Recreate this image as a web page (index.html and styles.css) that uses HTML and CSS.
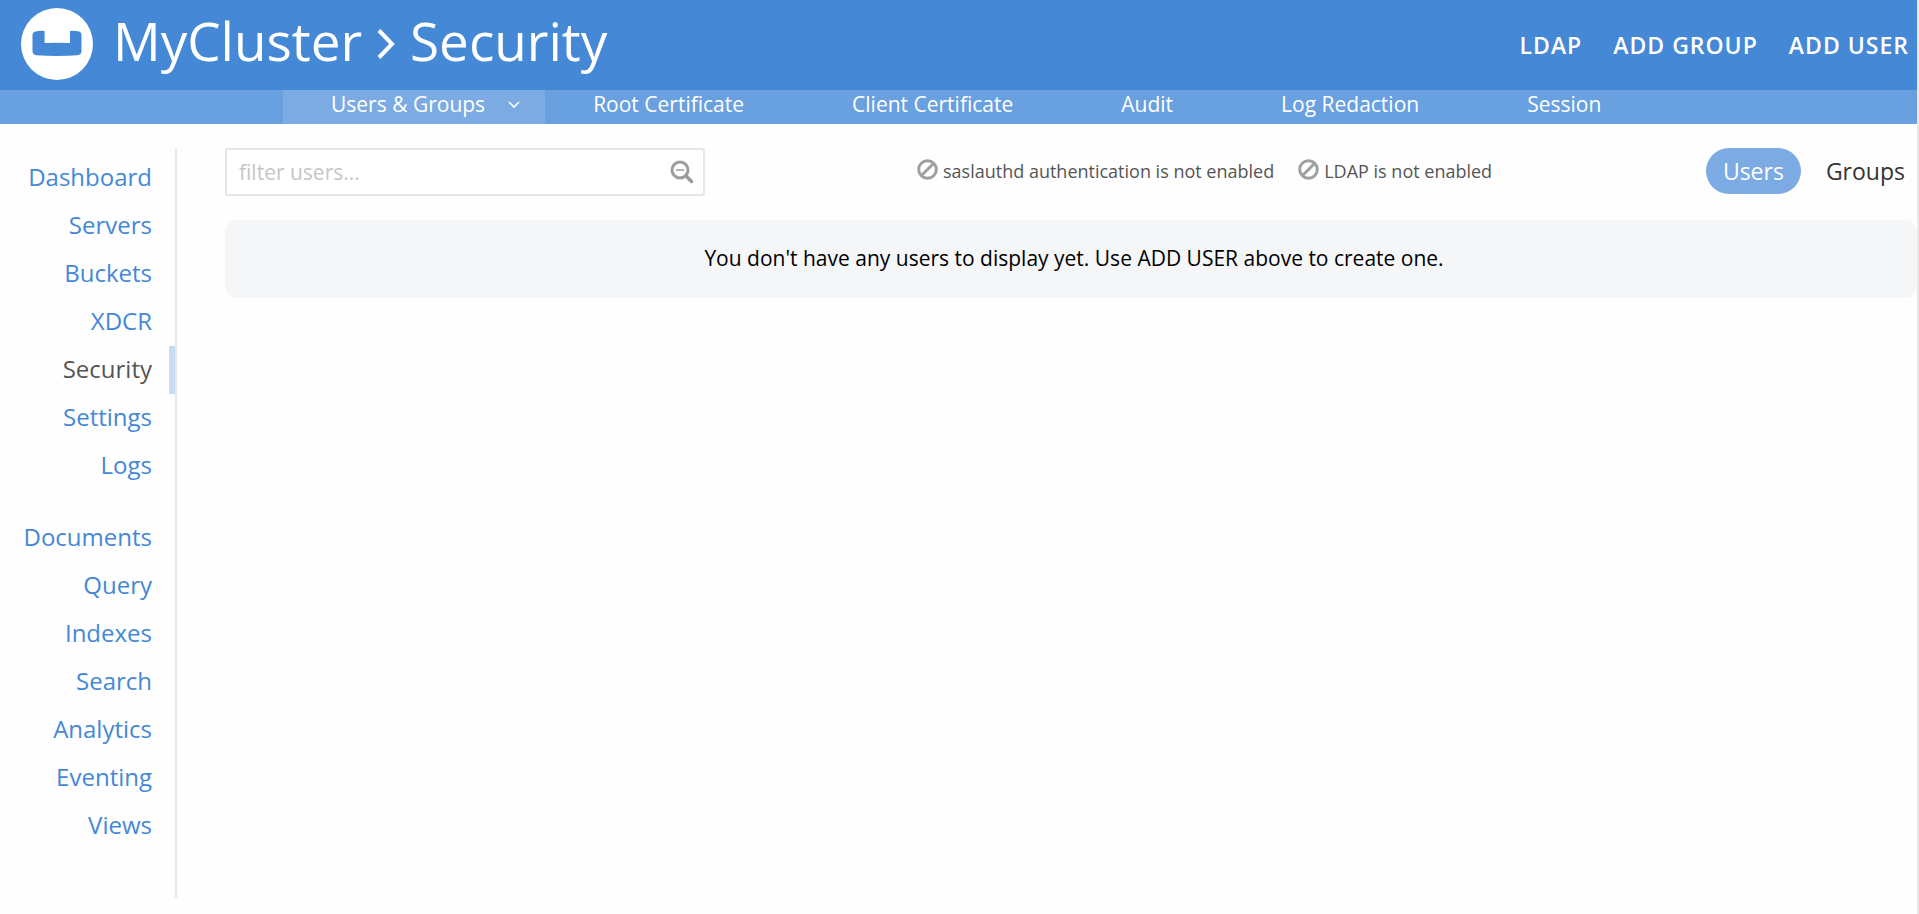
FILE: index.html
```html
<!DOCTYPE html>
<html lang="en">
<head>
<meta charset="utf-8">
<title>MyCluster &gt; Security</title>
<link rel="stylesheet" href="styles.css">
</head>
<body>
<div class="app">
  <header class="header">
    <svg class="logo" viewBox="0 0 72 72" aria-hidden="true">
      <circle cx="36" cy="36" r="36" fill="#fff"/>
      <path fill="#4588d6" d="M15.500 23.200q4-.6 8.100-.2V34.900q12.700-.5 25.400 0V23q4.100-.4 8.100.2 3.400.5 3.400 4V43q0 3.700-4 4.200-20.500 1.500-41 0-4-.5-4-4.200V27.200q0-3.500 4-4z"/>
    </svg>
    <h1 class="title">MyCluster
      <svg class="crumb" viewBox="0 0 18 30" role="img" aria-label="&gt;"><path d="M2 1.500L15 15 2 28.500" fill="none" stroke="currentColor" stroke-width="4"/></svg>
      Security</h1>
    <nav class="actions" aria-label="Actions">
      <a class="action" href="#">LDAP</a>
      <a class="action" href="#">ADD GROUP</a>
      <a class="action" href="#">ADD USER</a>
    </nav>
  </header>
  <nav class="tabs" aria-label="Security">
    <a class="tab tab-active" href="#">Users &amp; Groups
      <svg class="chevron" viewBox="0 0 14 10" aria-hidden="true"><path d="M2 2l5 5 5-5" fill="none" stroke="currentColor" stroke-width="1.600"/></svg>
    </a>
    <a class="tab" href="#">Root Certificate</a>
    <a class="tab" href="#">Client Certificate</a>
    <a class="tab" href="#">Audit</a>
    <a class="tab" href="#">Log Redaction</a>
    <a class="tab" href="#">Session</a>
  </nav>
  <div class="body">
    <nav class="sidebar" aria-label="Main">
      <a class="side" href="#">Dashboard</a>
      <a class="side" href="#">Servers</a>
      <a class="side" href="#">Buckets</a>
      <a class="side" href="#">XDCR</a>
      <a class="side side-active" href="#">Security</a>
      <a class="side" href="#">Settings</a>
      <a class="side" href="#">Logs</a>
      <a class="side side-group" href="#">Documents</a>
      <a class="side" href="#">Query</a>
      <a class="side" href="#">Indexes</a>
      <a class="side" href="#">Search</a>
      <a class="side" href="#">Analytics</a>
      <a class="side" href="#">Eventing</a>
      <a class="side" href="#">Views</a>
    </nav>
    <main class="main">
      <div class="toolbar">
        <div class="filter">
          <input class="filter-input" type="text" placeholder="filter users..." aria-label="filter users">
          <svg class="filter-icon" viewBox="0 0 24 24" aria-hidden="true"><g fill="none" stroke="#9c9c9c" stroke-linecap="round"><circle cx="10" cy="10" r="8" stroke-width="3"/><path d="M16.500 16.500l5 5" stroke-width="3.500"/><path d="M6.500 10h7" stroke-width="1.500"/></g></svg>
        </div>
        <div class="notices">
          <span class="notice"><svg class="ban" viewBox="0 0 21 21" aria-hidden="true"><g fill="none" stroke="#9f9f9f" stroke-width="3"><circle cx="10.500" cy="10.500" r="8.800"/><path d="M4.500 16.500l12-12"/></g></svg>saslauthd authentication is not enabled</span>
          <span class="notice"><svg class="ban" viewBox="0 0 21 21" aria-hidden="true"><g fill="none" stroke="#9f9f9f" stroke-width="3"><circle cx="10.500" cy="10.500" r="8.800"/><path d="M4.500 16.500l12-12"/></g></svg>LDAP is not enabled</span>
        </div>
        <div class="switch">
          <button class="pill pill-active" type="button">Users</button>
          <button class="pill" type="button">Groups</button>
        </div>
      </div>
      <p class="empty">You don't have any users to display yet. Use ADD USER above to create one.</p>
    </main>
  </div>
</div>
</body>
</html>
```
FILE: styles.css
```css
* { box-sizing: border-box; }
body {
  margin: 0;
  background: #fefefe;
  font-family: "Open Sans", "Noto Sans", sans-serif;
}
a { color: inherit; text-decoration: none; }
.app {
  min-height: 100vh;
  border-right: 2px solid #e8e8e8;
}
.header {
  display: flex;
  align-items: center;
  height: 90px;
  padding: 0 8px 2px 21px;
  background: #4588d6;
  color: #fff;
}
.logo { width: 72px; height: 72px; flex: none; }
.title {
  display: flex;
  align-items: center;
  gap: 15px;
  margin: 0 0 6px 20px;
  font-size: 53px;
  line-height: 72px;
  font-weight: 400;
}
.crumb { width: 18px; height: 30px; margin-top: 6px; }
.actions {
  display: flex;
  gap: 31px;
  margin: 2px 0 0 auto;
  font-size: 23px;
  line-height: 32px;
  font-weight: 600;
  letter-spacing: 1px;
}
.tabs {
  display: flex;
  height: 34px;
  padding-left: 283px;
  background: #69a0df;
  color: #fff;
  font-size: 21px;
  line-height: 29px;
}
.tab { padding: 0 60px 5px 48px; white-space: nowrap; }
.tab-active {
  display: flex;
  align-items: center;
  gap: 22px;
  padding-right: 24px;
  background: #7babe2;
}
.chevron { width: 14px; height: 10px; }
.body { display: flex; padding-top: 24px; }
.sidebar {
  flex: none;
  width: 177px;
  height: 750px;
  padding-top: 6px;
  border-right: 2px solid #e8e8e8;
  color: #4588d6;
  font-size: 24px;
  line-height: 46px;
  text-align: right;
}
.side { display: block; padding: 0 23px 2px 0; }
.side-active {
  padding-right: 17px;
  border-right: 6px solid #c7dbf2;
  color: #555;
}
.side-group { margin-top: 24px; }
.main { flex: 1; min-width: 0; padding-left: 48px; }
.toolbar { display: flex; align-items: center; height: 48px; }
.filter { position: relative; width: 480px; flex: none; }
.filter-input {
  display: block;
  width: 100%;
  height: 48px;
  padding: 0 48px 0 12px;
  border: 2px solid #e6e6e6;
  border-radius: 3px;
  background: #fff;
  font-family: inherit;
  font-size: 21px;
  color: #333;
}
.filter-input::placeholder { color: #c6c6c6; }
.filter-icon {
  position: absolute;
  right: 11px;
  top: 12px;
  width: 24px;
  height: 24px;
}
.notices {
  display: flex;
  gap: 24px;
  margin-left: 212px;
  padding-bottom: 2px;
  color: #555;
  font-size: 18px;
  line-height: 24px;
  white-space: nowrap;
}
.notice { display: flex; align-items: center; gap: 5px; }
.ban { width: 21px; height: 21px; margin-bottom: 4px; }
.switch { display: flex; gap: 8px; margin-left: auto; align-self: flex-start; }
.pill {
  height: 46px;
  padding: 0 17px;
  border: 0;
  border-radius: 23px;
  background: none;
  color: #333;
  font-family: inherit;
  font-size: 23px;
}
.pill:last-child { padding-right: 12px; }
.pill-active { background: #7babe2; color: #fff; }
.empty {
  margin: 24px 0 0;
  padding: 23px 0 25px 6px;
  border-radius: 12px;
  background: #f5f6f8;
  color: #000;
  font-size: 21px;
  line-height: 30px;
  text-align: center;
}
```
